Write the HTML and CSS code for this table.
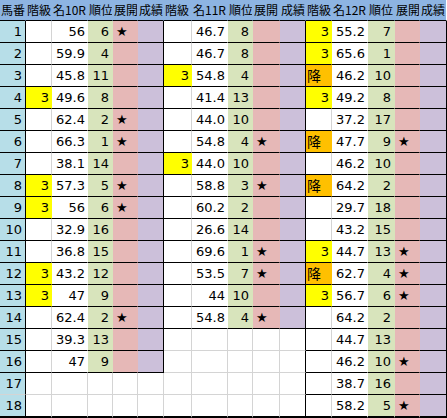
FILE: index.html
```html
<!DOCTYPE html>
<html lang="ja">
<head>
<meta charset="utf-8">
<title>成績表</title>
<link rel="stylesheet" href="styles.css">
</head>
<body>
<div class="sheet">
  <!-- header -->
  <div class="c h">馬番</div><div class="c h">階級</div><div class="c h">名10R</div><div class="c h">順位</div><div class="c h">展開</div><div class="c h">成績</div>
  <div class="c h">階級</div><div class="c h">名11R</div><div class="c h">順位</div><div class="c h">展開</div><div class="c h">成績</div>
  <div class="c h">階級</div><div class="c h">名12R</div><div class="c h">順位</div><div class="c h">展開</div><div class="c h hl">成績</div>

  <!-- 1 -->
  <div class="c n d">1</div><div class="c d k"></div><div class="c d v">56</div><div class="c d g">6</div><div class="c d p">★</div><div class="c d u"></div>
  <div class="c d k"></div><div class="c d v">46.7</div><div class="c d g">8</div><div class="c d p"></div><div class="c d u"></div>
  <div class="c d y">3</div><div class="c d v">55.2</div><div class="c d g">7</div><div class="c d p"></div><div class="c d u"></div>
  <!-- 2 -->
  <div class="c n d">2</div><div class="c d k"></div><div class="c d v">59.9</div><div class="c d g">4</div><div class="c d p"></div><div class="c d u"></div>
  <div class="c d k"></div><div class="c d v">46.7</div><div class="c d g">8</div><div class="c d p"></div><div class="c d u"></div>
  <div class="c d y">3</div><div class="c d v">65.6</div><div class="c d g">1</div><div class="c d p"></div><div class="c d u"></div>
  <!-- 3 -->
  <div class="c n d">3</div><div class="c d k"></div><div class="c d v">45.8</div><div class="c d g">11</div><div class="c d p"></div><div class="c d u"></div>
  <div class="c d y">3</div><div class="c d v">54.8</div><div class="c d g">4</div><div class="c d p"></div><div class="c d u"></div>
  <div class="c d o">降</div><div class="c d v">46.2</div><div class="c d g">10</div><div class="c d p"></div><div class="c d u"></div>
  <!-- 4 -->
  <div class="c n d">4</div><div class="c d y">3</div><div class="c d v">49.6</div><div class="c d g">8</div><div class="c d p"></div><div class="c d u"></div>
  <div class="c d k"></div><div class="c d v">41.4</div><div class="c d g">13</div><div class="c d p"></div><div class="c d u"></div>
  <div class="c d y">3</div><div class="c d v">49.2</div><div class="c d g">8</div><div class="c d p"></div><div class="c d u"></div>
  <!-- 5 -->
  <div class="c n d">5</div><div class="c d k"></div><div class="c d v">62.4</div><div class="c d g">2</div><div class="c d p">★</div><div class="c d u"></div>
  <div class="c d k"></div><div class="c d v">44.0</div><div class="c d g">10</div><div class="c d p"></div><div class="c d u"></div>
  <div class="c d k"></div><div class="c d v">37.2</div><div class="c d g">17</div><div class="c d p"></div><div class="c d u"></div>
  <!-- 6 -->
  <div class="c n d">6</div><div class="c d k"></div><div class="c d v">66.3</div><div class="c d g">1</div><div class="c d p">★</div><div class="c d u"></div>
  <div class="c d k"></div><div class="c d v">54.8</div><div class="c d g">4</div><div class="c d p">★</div><div class="c d u"></div>
  <div class="c d o">降</div><div class="c d v">47.7</div><div class="c d g">9</div><div class="c d p">★</div><div class="c d u"></div>
  <!-- 7 -->
  <div class="c n d">7</div><div class="c d k"></div><div class="c d v">38.1</div><div class="c d g">14</div><div class="c d p"></div><div class="c d u"></div>
  <div class="c d y">3</div><div class="c d v">44.0</div><div class="c d g">10</div><div class="c d p"></div><div class="c d u"></div>
  <div class="c d k"></div><div class="c d v">46.2</div><div class="c d g">10</div><div class="c d p"></div><div class="c d u"></div>
  <!-- 8 -->
  <div class="c n d">8</div><div class="c d y">3</div><div class="c d v">57.3</div><div class="c d g">5</div><div class="c d p">★</div><div class="c d u"></div>
  <div class="c d k"></div><div class="c d v">58.8</div><div class="c d g">3</div><div class="c d p">★</div><div class="c d u"></div>
  <div class="c d o">降</div><div class="c d v">64.2</div><div class="c d g">2</div><div class="c d p"></div><div class="c d u"></div>
  <!-- 9 -->
  <div class="c n d">9</div><div class="c d y">3</div><div class="c d v">56</div><div class="c d g">6</div><div class="c d p">★</div><div class="c d u"></div>
  <div class="c d k"></div><div class="c d v">60.2</div><div class="c d g">2</div><div class="c d p"></div><div class="c d u"></div>
  <div class="c d k"></div><div class="c d v">29.7</div><div class="c d g">18</div><div class="c d p"></div><div class="c d u"></div>
  <!-- 10 -->
  <div class="c n d">10</div><div class="c d k"></div><div class="c d v">32.9</div><div class="c d g">16</div><div class="c d p"></div><div class="c d u"></div>
  <div class="c d k"></div><div class="c d v">26.6</div><div class="c d g">14</div><div class="c d p"></div><div class="c d u"></div>
  <div class="c d k"></div><div class="c d v">43.2</div><div class="c d g">15</div><div class="c d p"></div><div class="c d u"></div>
  <!-- 11 -->
  <div class="c n d">11</div><div class="c d k"></div><div class="c d v">36.8</div><div class="c d g">15</div><div class="c d p"></div><div class="c d u"></div>
  <div class="c d k"></div><div class="c d v">69.6</div><div class="c d g">1</div><div class="c d p">★</div><div class="c d u"></div>
  <div class="c d y">3</div><div class="c d v">44.7</div><div class="c d g">13</div><div class="c d p">★</div><div class="c d u"></div>
  <!-- 12 -->
  <div class="c n d">12</div><div class="c d y">3</div><div class="c d v">43.2</div><div class="c d g">12</div><div class="c d p"></div><div class="c d u"></div>
  <div class="c d k"></div><div class="c d v">53.5</div><div class="c d g">7</div><div class="c d p">★</div><div class="c d u"></div>
  <div class="c d o">降</div><div class="c d v">62.7</div><div class="c d g">4</div><div class="c d p">★</div><div class="c d u"></div>
  <!-- 13 -->
  <div class="c n d">13</div><div class="c d y">3</div><div class="c d v">47</div><div class="c d g">9</div><div class="c d p"></div><div class="c d u"></div>
  <div class="c d k"></div><div class="c d v">44</div><div class="c d g">10</div><div class="c d p"></div><div class="c d u"></div>
  <div class="c d y">3</div><div class="c d v">56.7</div><div class="c d g">6</div><div class="c d p">★</div><div class="c d u"></div>
  <!-- 14 -->
  <div class="c n d">14</div><div class="c d k"></div><div class="c d v">62.4</div><div class="c d g">2</div><div class="c d p">★</div><div class="c d u"></div>
  <div class="c d k"></div><div class="c d v">54.8</div><div class="c d g">4</div><div class="c d p">★</div><div class="c d u"></div>
  <div class="c d k"></div><div class="c d v">64.2</div><div class="c d g">2</div><div class="c d p"></div><div class="c d u"></div>
  <!-- 15 -->
  <div class="c n d">15</div><div class="c d k"></div><div class="c d v">39.3</div><div class="c d g">13</div><div class="c d p"></div><div class="c d u"></div>
  <div class="c"></div><div class="c"></div><div class="c"></div><div class="c"></div><div class="c bk"></div>
  <div class="c d k"></div><div class="c d v">44.7</div><div class="c d g">13</div><div class="c d p"></div><div class="c d u"></div>
  <!-- 16 -->
  <div class="c n d">16</div><div class="c d k"></div><div class="c d v">47</div><div class="c d g">9</div><div class="c d p"></div><div class="c d u"></div>
  <div class="c"></div><div class="c"></div><div class="c"></div><div class="c"></div><div class="c bk"></div>
  <div class="c d k"></div><div class="c d v">46.2</div><div class="c d g">10</div><div class="c d p">★</div><div class="c d u"></div>
  <!-- 17 -->
  <div class="c n">17</div><div class="c"></div><div class="c"></div><div class="c"></div><div class="c"></div><div class="c"></div>
  <div class="c"></div><div class="c"></div><div class="c"></div><div class="c"></div><div class="c bk"></div>
  <div class="c d k"></div><div class="c d v">38.7</div><div class="c d g">16</div><div class="c d p"></div><div class="c d u"></div>
  <!-- 18 -->
  <div class="c n z">18</div><div class="c z"></div><div class="c z"></div><div class="c z"></div><div class="c z"></div><div class="c z"></div>
  <div class="c z"></div><div class="c z"></div><div class="c z"></div><div class="c z"></div><div class="c bk z"></div>
  <div class="c d k z"></div><div class="c d v z">58.2</div><div class="c d g z">5</div><div class="c d p z">★</div><div class="c d u z"></div>
</div>
</body>
</html>
```

FILE: styles.css
```css
html, body {
  margin: 0;
  padding: 0;
  background: #ffffff;
}

.sheet {
  display: grid;
  grid-template-columns: 26px 26px 36px 25px 25px 26px 28px 36px 25px 27px 26px 26px 36px 27px 25px 27px;
  grid-template-rows: 21px repeat(17, 22px) 23px;
  width: 447px;
  font-family: "DejaVu Sans", Verdana, sans-serif;
  font-size: 13px;
  color: #000;
}

.c {
  box-sizing: border-box;
  border-right: 1px solid #d4d4d4;
  border-bottom: 1px solid #d4d4d4;
  line-height: 21px;
  white-space: nowrap;
  overflow: hidden;
  text-align: right;
  padding-right: 2px;
}

.h {
  background: #8db4e2;
  border-right-color: #8db4e2;
  border-bottom-color: #000;
  font-family: "Noto Sans CJK JP", "Noto Sans CJK SC", sans-serif;
  font-size: 12px;
  line-height: 19px;
  text-align: left;
  padding: 0 0 0 1px;
}

.hl {
  border-right-color: #ffffff;
}

.n {
  background: #b7dee8;
  border-right-color: #000;
  padding-right: 3px;
}

.d {
  border-bottom-color: #000;
}

.k {
  background: #ffffff;
}

.y {
  background: #ffff00;
  border-right-color: #ffff00;
}

.o {
  background: #ffc000;
  border-right-color: #ffc000;
  text-align: left;
  padding: 0 0 0 1px;
  font-family: "Noto Sans CJK JP", sans-serif;
  font-size: 14px;
}

.v {
  background: #ffffff;
  border-right-color: #ffffff;
}

.g {
  background: #d8e4bc;
  border-right-color: #d8e4bc;
  padding-right: 3px;
}

.p {
  background: #e6b8b7;
  border-right-color: #e6b8b7;
  text-align: left;
  padding: 0 0 0 3px;
  font-size: 13px;
}

.u {
  background: #ccc0da;
  border-right-color: #000;
}

.bk {
  border-right-color: #000;
}

.z {
  border-bottom: 2px solid #000;
}
```
